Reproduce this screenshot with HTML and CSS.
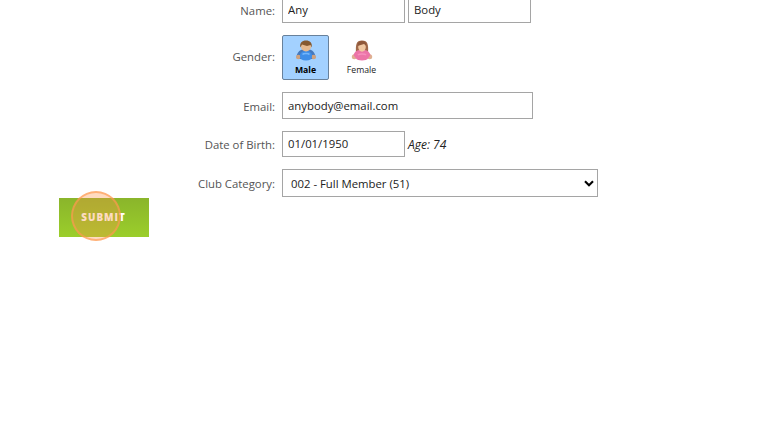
FILE: index.html
```
<!DOCTYPE html>
<html lang="en">
<head>
    <meta charset="UTF-8">
    <meta name="viewport" content="width=device-width, initial-scale=1.0">
    <title>Member Details</title>
    <link rel="stylesheet" href="styles.css">
</head>
<body>
    <form class="member-form">
        <div class="row row-name">
            <label for="firstName">Name:</label>
            <input type="text" id="firstName" class="short" value="Any">
            <input type="text" class="short last-name" value="Body">
        </div>
        <div class="row row-gender">
            <label>Gender:</label>
            <div class="gender selected">
                <svg width="22" height="22" viewBox="0 0 22 22">
                    <path d="M1.500 18C2 14 4 11 8 10.500h6c4 .5 6 3.500 6.500 7.500 0 1.500-1 2-2.500 2H4c-1.500 0-2.500-.5-2.500-2z" fill="#4579bd"/>
                    <circle cx="3.300" cy="18" r="2.300" fill="#cfa27f"/>
                    <circle cx="18.700" cy="18" r="2.300" fill="#cfa27f"/>
                    <path d="M5 17c0-3 2-5 6-5s6 2 6 5-2 4.500-6 4.500S5 20 5 17z" fill="#3e8ee8"/>
                    <path d="M7.500 15.500c1-1.500 6-1.500 7 0" stroke="#72b5fb" stroke-width="1.500" fill="none"/>
                    <ellipse cx="11" cy="7.500" rx="5" ry="5" fill="#e6b98e"/>
                    <path d="M5.300 8.500C4.500 4 7 1.500 11 1.500s6.500 2.500 5.700 7l-1.200-2.500L12 7 7 5.500z" fill="#86592f"/>
                </svg>
                <span>Male</span>
            </div>
            <div class="gender">
                <svg width="22" height="22" viewBox="0 0 22 22">
                    <path d="M5 14C4.500 6 5 1.500 11 1.500S17.500 6 17 14z" fill="#a0694a"/>
                    <circle cx="3.300" cy="17.800" r="2.500" fill="#dfb091"/>
                    <circle cx="18.700" cy="17.800" r="2.500" fill="#dfb091"/>
                    <path d="M2.500 16c1-3 3-4.500 5.500-5h6c2.500.5 4.500 2 5.500 5L17 19.500c-1 2.500-11 2.500-12 0z" fill="#ec74a8"/>
                    <path d="M7 16c1-1.500 7-1.500 8 0" stroke="#f68fbd" stroke-width="1.500" fill="none"/>
                    <ellipse cx="11" cy="8" rx="3.800" ry="4.700" fill="#f0c8a2"/>
                    <path d="M6.500 7C6.500 3.500 8 2 11 2s4.500 1.500 4.500 5L13 5z" fill="#8f583a"/>
                </svg>
                <span>Female</span>
            </div>
        </div>
        <div class="row row-email">
            <label for="email">Email:</label>
            <input type="text" id="email" class="long" value="anybody@email.com">
        </div>
        <div class="row row-dob">
            <label for="dob">Date of Birth:</label>
            <input type="text" id="dob" class="short" value="01/01/1950">
            <em class="age">Age: 74</em>
        </div>
        <div class="row row-category">
            <label>Club Category:</label>
            <div class="category">
                <span>002 - Full Member (51)</span>
                <svg width="10" height="7" viewBox="0 0 10 7">
                    <path d="M1 1.200l4 4 4-4" fill="none" stroke="#000" stroke-width="2.100"/>
                </svg>
            </div>
        </div>
        <button type="button" class="submit">SUBMIT<span class="click-marker"></span></button>
    </form>
</body>
</html>
```

FILE: styles.css
```
* {
    box-sizing: border-box;
}
body {
    font-family: "Open Sans", sans-serif;
    font-size: 11.35px;
    margin: 0;
    min-height: 100vh;
    background-color: #fff;
    color: #222;
}
.member-form {
    display: flex;
    flex-direction: column;
    /* pulls the first row off the top of the page */
    margin-top: -4px;
}
.row {
    display: flex;
    align-items: center;
    margin-bottom: 12px;
}
label {
    width: 275px;
    margin-right: 7px;
    padding-top: 1px;
    text-align: right;
    color: #555;
}
.row-name label {
    padding-top: 2px;
}
.row-gender label {
    padding-top: 0;
    padding-bottom: 2px;
}
input {
    height: 27px;
    margin: 0;
    padding: 0 5px;
    border: 1px solid #a5a5a5;
    border-radius: 0;
    background-color: #fff;
    color: #222;
    font-family: inherit;
    font-size: 11.35px;
}
.short {
    width: 123px;
}
.last-name {
    margin-left: 3px;
}
.long {
    width: 251px;
}
.row-dob input {
    height: 26px;
    padding-bottom: 1px;
}
.gender {
    display: flex;
    flex-direction: column;
    align-items: center;
    width: 47px;
    height: 45px;
    margin-right: 9px;
    padding-top: 3px;
    border: 1px solid transparent;
    border-radius: 2px;
    font-size: 8.7px;
    line-height: 12px;
}
.gender span {
    margin-top: 3px;
}
.selected {
    border-color: #68819b;
    background-color: #a3d1ff;
    color: #000;
    font-weight: bold;
}
.age {
    margin-left: 3px;
    font-size: 12px;
}
.category {
    display: flex;
    align-items: center;
    justify-content: space-between;
    width: 316px;
    height: 28px;
    padding: 1px 3px 0 8px;
    border: 1px solid #a5a5a5;
}
.row-category {
    margin-bottom: 1px;
}
.submit {
    position: relative;
    width: 90px;
    height: 39px;
    margin-left: 59px;
    padding: 0 1px 1px 0;
    border: 0;
    background: linear-gradient(#8ab52b, #9bce2b);
    color: #fff;
    font-family: inherit;
    font-size: 9.8px;
    font-weight: 800;
    letter-spacing: 1px;
    overflow: visible;
}
/* ring over the clicked spot */
.click-marker {
    position: absolute;
    left: 12px;
    top: -7px;
    width: 50px;
    height: 50px;
    border: 2px solid rgba(255, 153, 80, 0.65);
    border-radius: 50%;
    background-color: rgba(255, 145, 66, 0.33);
}
```
